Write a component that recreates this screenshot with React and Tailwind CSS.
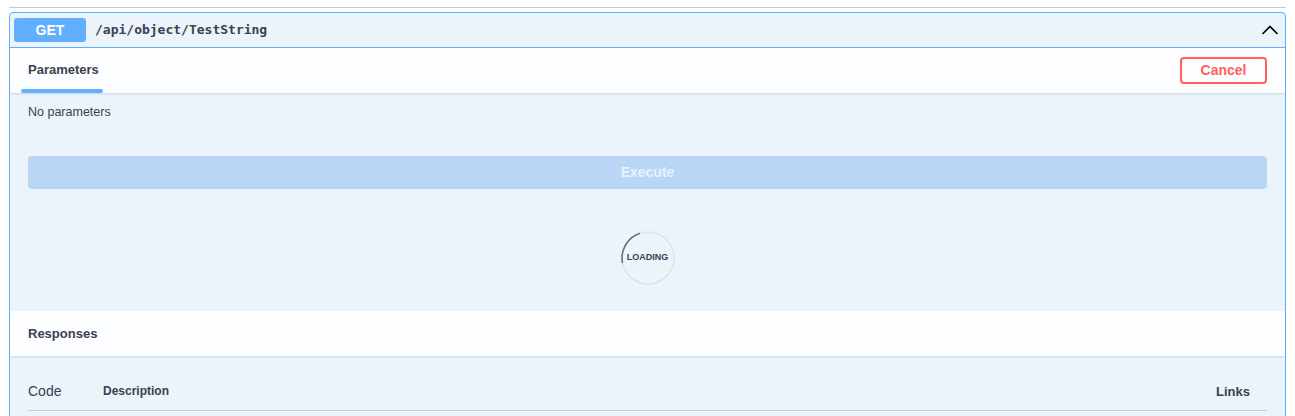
import React from "react";

const ChevronUp = () => (
  <svg width="18" height="12" viewBox="0 0 18 12" fill="none" stroke="#000" strokeWidth="1.6">
    <path d="M1.5 10 L9 2.5 L16.5 10" />
  </svg>
);

const Loading = () => (
  <div className="relative flex h-[54px] w-[54px] items-center justify-center">
    <svg className="absolute inset-0" width="54" height="54" viewBox="0 0 54 54" fill="none">
      <circle cx="27" cy="27" r="26" stroke="#dfe3e9" strokeWidth="1.5" />
      <path d="M19 2.3 A26 26 0 0 0 1.5 32" stroke="#6b6f78" strokeWidth="1.6" />
    </svg>
    <span className="relative text-[9px] font-bold text-[#3b4151]">LOADING</span>
  </div>
);

export default function App() {
  return (
    <div className="h-[416px] overflow-hidden bg-white px-[9px] pt-[7px] font-['Liberation_Sans',Arial,sans-serif] text-[#3b4151]">
      <div className="h-px bg-[#c7c9cf]" />
      <div className="mt-[4px] rounded-[4px] border border-[#61affe] bg-[#ebf3fb]">
        <div className="flex h-[35px] items-center border-b border-[#61affe] pl-[4px] pr-[6px]">
          <span className="flex h-[24px] w-[72px] items-center justify-center rounded-[3px] bg-[#61affe] text-[14px] font-bold text-white">
            GET
          </span>
          <span className="ml-[9px] font-['DejaVu_Sans_Mono',monospace] text-[13px] font-semibold text-[#3b4151]">
            /api/object/TestString
          </span>
          <span className="ml-auto flex items-center">
            <ChevronUp />
          </span>
        </div>

        <div className="flex h-[45px] items-center justify-between bg-[#fcfdff] pl-[11px] pr-[18px] shadow-[0_1px_2px_rgba(0,0,0,0.12)]">
          <div className="flex h-full w-[82px] flex-col justify-end">
            <span className="px-[7px] pb-[10px] text-[13px] font-bold">Parameters</span>
            <div className="h-[4px] rounded-[2px] bg-[#61affe]" />
          </div>
          <button className="h-[27px] w-[87px] rounded-[4px] border-2 border-[#ff6060] bg-transparent text-[14px] font-bold text-[#ff6060]">
            Cancel
          </button>
        </div>

        <div className="px-[18px] pt-[10px]">
          <p className="text-[12.5px]">No parameters</p>
          <button className="mt-[34px] flex h-[33px] w-full items-center justify-center rounded-[4px] bg-[#b9d6f4] text-[14px] font-bold text-[#e8f1fb]">
            Execute
          </button>
          <div className="flex justify-center pt-[42px] pb-[26px]">
            <Loading />
          </div>
        </div>

        <div className="flex h-[45px] items-center bg-[#fcfdff] px-[18px] shadow-[0_1px_2px_rgba(0,0,0,0.12)]">
          <span className="text-[13px] font-bold">Responses</span>
        </div>

        <div className="px-[18px] pt-[25px]">
          <div className="flex items-center border-b border-[#c5cbd3] pb-[8px]">
            <span className="w-[75px] text-[14px]">Code</span>
            <span className="text-[12px] font-bold">Description</span>
            <span className="ml-auto pr-[17px] text-[13px] font-bold">Links</span>
          </div>
          <div className="h-[20px]" />
        </div>
      </div>
    </div>
  );
}
